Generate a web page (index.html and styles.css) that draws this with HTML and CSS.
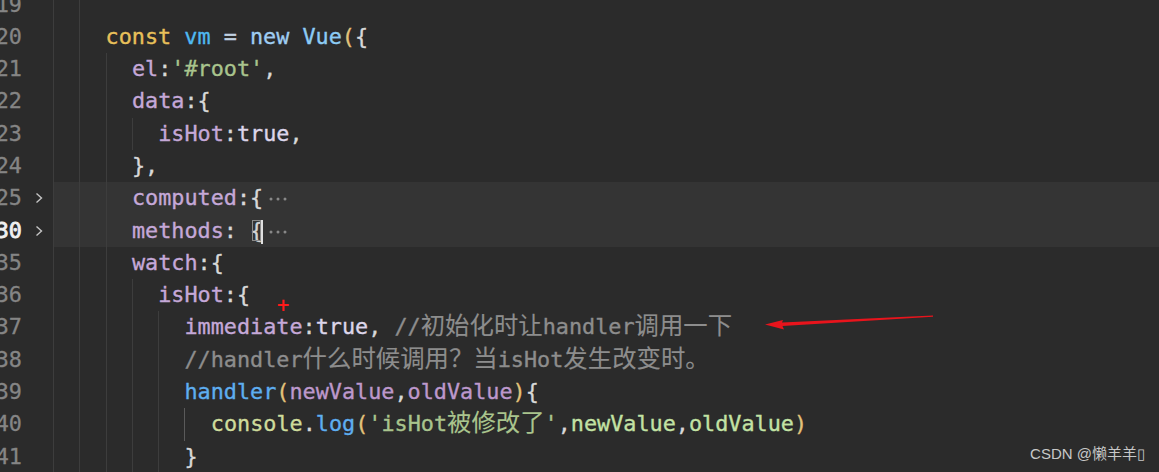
FILE: index.html
```html
<!DOCTYPE html>
<html>
<head>
<meta charset="utf-8">
<link rel="stylesheet" href="styles.css">
</head>
<body>
<div class="editor">
  <div class="lines">
    <div class="line"><span class="num">19</span><span class="fold"></span><span class="code"><i class="g"></i><i class="g"></i></span></div>
    <div class="line"><span class="num">20</span><span class="fold"></span><span class="code"><i class="g"></i><i class="g"></i><span class="txt"><span class="kw">const</span> <span class="var">vm</span> <span class="op">=</span> <span class="new">new</span> <span class="cls">Vue</span><span class="paren">(</span><span class="pun">{</span></span></span></div>
    <div class="line"><span class="num">21</span><span class="fold"></span><span class="code"><i class="g"></i><i class="g"></i><i class="g"></i><span class="txt"><span class="prop">el</span><span class="pun">:</span><span class="str">'#root'</span><span class="pun">,</span></span></span></div>
    <div class="line"><span class="num">22</span><span class="fold"></span><span class="code"><i class="g"></i><i class="g"></i><i class="g"></i><span class="txt"><span class="prop">data</span><span class="pun">:{</span></span></span></div>
    <div class="line"><span class="num">23</span><span class="fold"></span><span class="code"><i class="g"></i><i class="g"></i><i class="g"></i><i class="g"></i><span class="txt"><span class="prop">isHot</span><span class="pun">:</span><span class="bool">true</span><span class="pun">,</span></span></span></div>
    <div class="line"><span class="num">24</span><span class="fold"></span><span class="code"><i class="g"></i><i class="g"></i><i class="g"></i><span class="txt"><span class="pun">},</span></span></span></div>
    <div class="line hl"><span class="num">25</span><span class="fold"><svg width="10" height="14" viewBox="0 0 10 14"><path d="M2.5 2.5 L7.5 7 L2.5 11.5" fill="none" stroke="#c5c5c5" stroke-width="1.4"/></svg></span><span class="code"><i class="g"></i><i class="g"></i><i class="g"></i><span class="txt"><span class="prop">computed</span><span class="pun">:{</span><svg class="dots" width="24" height="6" viewBox="0 0 24 6"><circle cx="5" cy="3" r="1.5"/><circle cx="12" cy="3" r="1.5"/><circle cx="19" cy="3" r="1.5"/></svg></span></span></div>
    <div class="line hl"><span class="num active">30</span><span class="fold"><svg width="10" height="14" viewBox="0 0 10 14"><path d="M2.5 2.5 L7.5 7 L2.5 11.5" fill="none" stroke="#c5c5c5" stroke-width="1.4"/></svg></span><span class="code"><i class="g"></i><i class="g"></i><i class="g"></i><span class="txt"><span class="prop">methods</span><span class="pun">:</span> <span class="match">{</span><span class="cursor"></span><svg class="dots" width="24" height="6" viewBox="0 0 24 6"><circle cx="5" cy="3" r="1.5"/><circle cx="12" cy="3" r="1.5"/><circle cx="19" cy="3" r="1.5"/></svg></span></span></div>
    <div class="line"><span class="num">35</span><span class="fold"></span><span class="code"><i class="g"></i><i class="g"></i><i class="g"></i><span class="txt"><span class="prop">watch</span><span class="pun">:{</span></span></span></div>
    <div class="line"><span class="num">36</span><span class="fold"></span><span class="code"><i class="g"></i><i class="g"></i><i class="g"></i><i class="g"></i><span class="txt"><span class="prop">isHot</span><span class="pun">:{</span></span></span></div>
    <div class="line"><span class="num">37</span><span class="fold"></span><span class="code"><i class="g"></i><i class="g"></i><i class="g"></i><i class="g"></i><i class="g"></i><span class="txt"><span class="prop">immediate</span><span class="pun">:</span><span class="bool">true</span><span class="pun">,</span> <span class="cmt">//<span class="cjk">初始化时让</span>handler<span class="cjk">调用一下</span></span></span></span></div>
    <div class="line"><span class="num">38</span><span class="fold"></span><span class="code"><i class="g"></i><i class="g"></i><i class="g"></i><i class="g"></i><i class="g"></i><span class="txt"><span class="cmt">//handler<span class="cjk">什么时候调用？当</span>isHot<span class="cjk">发生改变时。</span></span></span></span></div>
    <div class="line"><span class="num">39</span><span class="fold"></span><span class="code"><i class="g"></i><i class="g"></i><i class="g"></i><i class="g"></i><i class="g"></i><span class="txt"><span class="fn">handler</span><span class="paren">(</span><span class="param">newValue</span><span class="pun">,</span><span class="param">oldValue</span><span class="paren">)</span><span class="pun">{</span></span></span></div>
    <div class="line"><span class="num">40</span><span class="fold"></span><span class="code"><i class="g"></i><i class="g"></i><i class="g"></i><i class="g"></i><i class="g"></i><i class="g lit"></i><span class="txt"><span class="obj">console</span><span class="pun">.</span><span class="fn">log</span><span class="paren">(</span><span class="str">'isHot<span class="cjk">被修改了</span>'</span><span class="pun">,</span><span class="arg">newValue</span><span class="pun">,</span><span class="arg">oldValue</span><span class="paren">)</span></span></span></div>
    <div class="line"><span class="num">41</span><span class="fold"></span><span class="code"><i class="g"></i><i class="g"></i><i class="g"></i><i class="g"></i><i class="g"></i><span class="txt"><span class="pun">}</span></span></span></div>
  </div>
  <span class="cross">+</span>
  <svg class="arrow" width="1159" height="472" viewBox="0 0 1159 472">
    <path d="M933 315.5 L782 322.5 L783 320 L765 324.5 L784 329.5 L782.5 326 L933 316.8 Z" fill="#e8141c"/>
  </svg>
  <div class="watermark">CSDN @懒羊羊▯</div>
</div>
</body>
</html>
```
FILE: styles.css
```css
html, body {
  margin: 0;
  padding: 0;
  background: #2b2b2b;
  overflow: hidden;
}
.editor {
  position: relative;
  width: 1159px;
  height: 472px;
  overflow: hidden;
  background: #2b2b2b;
  font-family: "DejaVu Sans Mono", "Noto Sans CJK SC", monospace;
  font-size: 21.8px;
}
.lines {
  margin-top: -11.5px;
}
.line {
  display: flex;
  height: 32.3px;
  line-height: 32.3px;
  white-space: pre;
}
.line.hl .code {
  background: #343434;
}
.num {
  width: 22px;
  flex: none;
  text-align: right;
  color: #858585;
  direction: rtl;
  -webkit-text-stroke: 0.3px currentColor;
}
.num.active {
  color: #f0f0f0;
  -webkit-text-stroke: 0.8px currentColor;
}
.fold {
  width: 31px;
  flex: none;
  display: flex;
  align-items: center;
  padding-left: 12px;
  box-sizing: border-box;
}
.code {
  flex: 1;
  display: flex;
  align-items: stretch;
  color: #d4d4d4;
}
.txt {
  white-space: pre;
  -webkit-text-stroke: 0.35px currentColor;
}
.cjk {
  font-family: "Noto Sans CJK SC", sans-serif;
  font-size: 24.4px;
  line-height: 1;
  -webkit-text-stroke: 0.1px currentColor;
}
.g {
  display: block;
  width: 26.3px;
  flex: none;
  box-sizing: border-box;
  border-left: 1px solid #3d3d3d;
}
.g.lit {
  border-left-color: #5a5a5a;
}
.kw { color: #e8c05a; }
.var { color: #4fb8f0; }
.op { color: #c0d0e0; }
.new { color: #9fcdf2; }
.cls { color: #8ccbf5; }
.paren { color: #e2c27a; }
.pun { color: #d8d8d8; }
.prop { color: #c5a8d8; }
.str { color: #a9c48d; }
.bool { color: #ddd6ea; }
.cmt { color: #8d8d8d; }
.fn { color: #5eaef0; }
.param { color: #bd98cc; }
.obj { color: #cfdc9c; }
.arg { color: #c3e2a4; }
.dots {
  fill: #888888;
  margin-left: 3px;
  vertical-align: middle;
}
.match {
  outline: 1px solid #8a8a8a;
  outline-offset: -3px;
}
.cursor {
  display: inline-block;
  width: 2px;
  height: 24px;
  margin-left: -2px;
  vertical-align: middle;
  background: #e0e0e0;
}
.cross {
  position: absolute;
  left: 276px;
  top: 295px;
  color: #ff1a1a;
  font-family: "DejaVu Sans", sans-serif;
  font-size: 17px;
  font-weight: bold;
  line-height: 20px;
}
.arrow {
  position: absolute;
  left: 0;
  top: 0;
  pointer-events: none;
}
.watermark {
  position: absolute;
  right: 14px;
  bottom: 9px;
  font-family: "Liberation Sans", "Noto Sans CJK SC", sans-serif;
  font-size: 15px;
  color: #c8c8c8;
}
```
